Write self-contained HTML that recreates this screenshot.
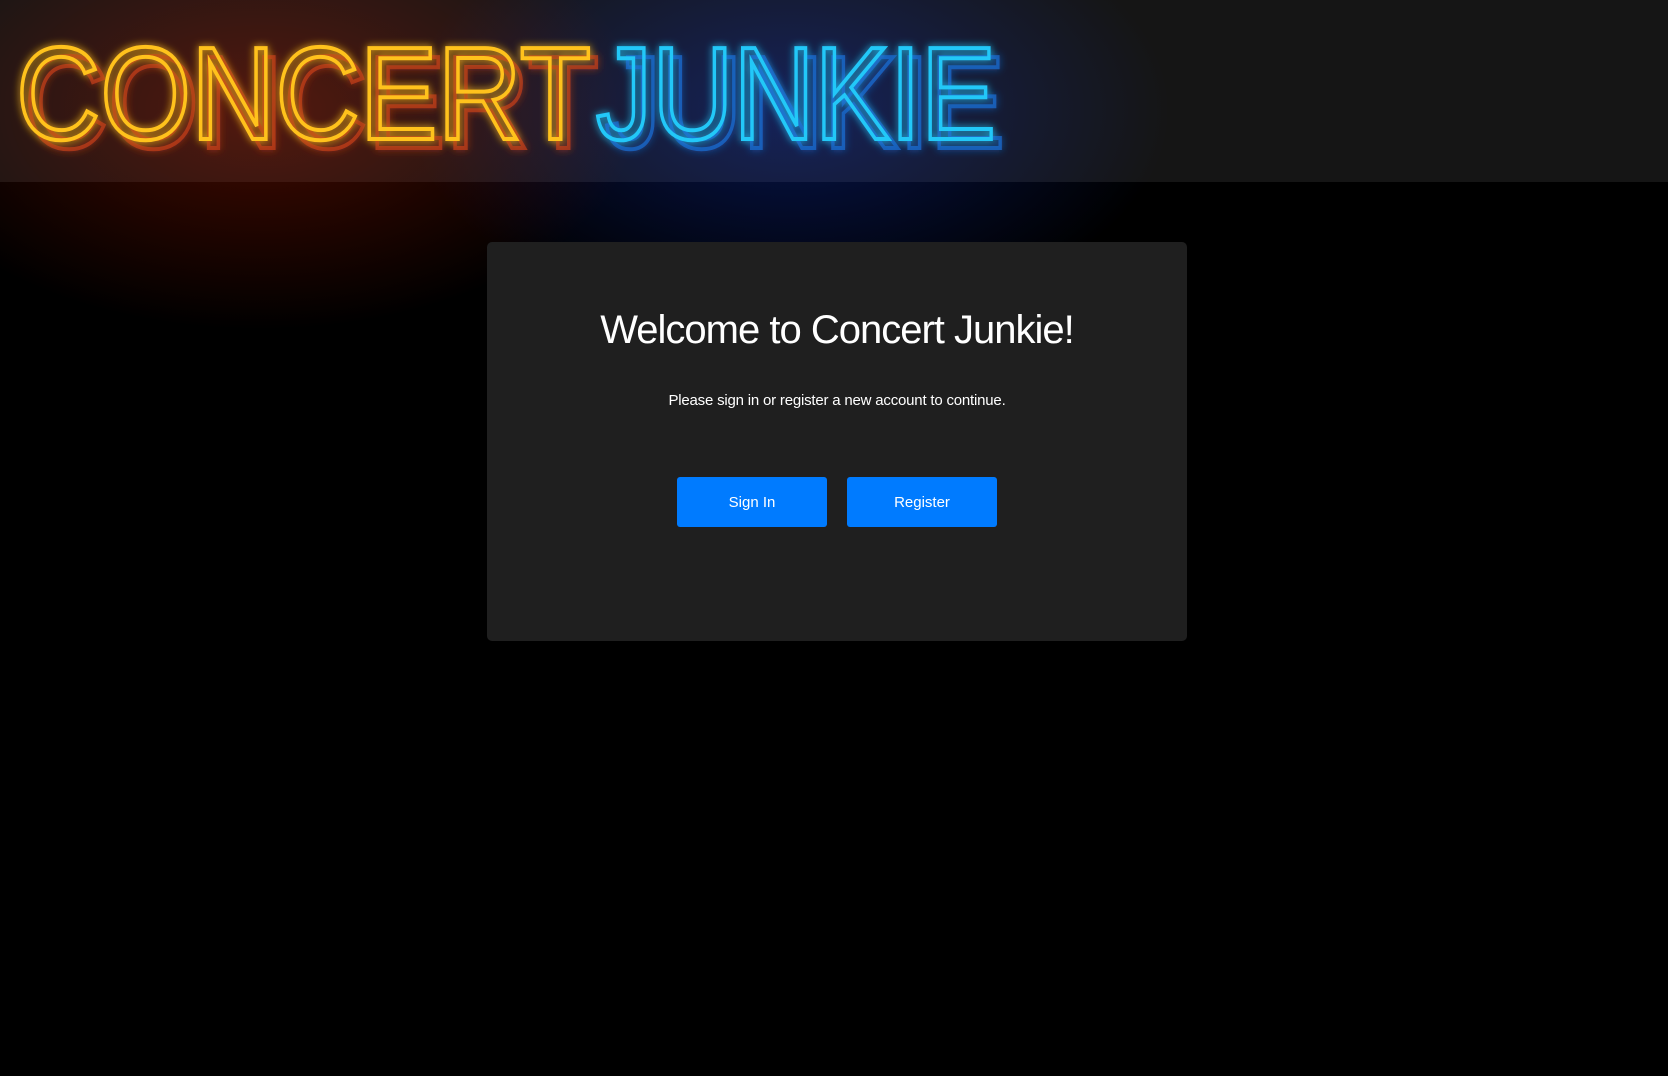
<!DOCTYPE html>
<html><head><meta charset="utf-8"><style>
html,body{margin:0;padding:0;background:#000;width:1668px;height:1076px;overflow:hidden;font-family:"Liberation Sans",sans-serif;}
.hdr{position:absolute;left:0;top:0;width:1668px;height:182px;background:#151515;}
.glow{position:absolute;left:0;top:0;width:1668px;height:420px;pointer-events:none;
background:radial-gradient(ellipse 380px 220px at 260px 110px,rgba(200,30,0,.35),rgba(200,30,0,0) 100%),
radial-gradient(ellipse 380px 220px at 790px 110px,rgba(20,60,220,.35),rgba(20,60,220,0) 100%);}
.card{position:absolute;left:487px;top:242px;width:700px;height:399px;background:#1f1f1f;border-radius:5px;text-align:center;color:#fff;}
h1{margin:0;position:absolute;top:66px;width:100%;font-weight:normal;font-size:40px;letter-spacing:-1px;}
p{margin:0;position:absolute;top:150px;width:100%;font-size:15px;letter-spacing:-0.2px;}
.btn{position:absolute;top:235px;width:150px;height:50px;background:#007bff;border-radius:3px;color:#fff;font-size:15px;line-height:52px;}
</style></head><body>
<div class="hdr"></div>
<div class="glow"></div>
<svg style="position:absolute;left:0;top:0" width="1100" height="190">
<defs>
<filter id="g" x="-10%" y="-30%" width="120%" height="160%"><feGaussianBlur stdDeviation="4" result="b"/><feMerge><feMergeNode in="b"/><feMergeNode in="SourceGraphic"/></feMerge></filter>
</defs>
<g font-family="Liberation Sans,sans-serif" font-size="132" fill="none" stroke-width="4" filter="url(#g)">
<text x="24" y="148" textLength="575" lengthAdjust="spacingAndGlyphs" stroke="#c8401a" opacity=".7">CONCERT</text>
<text x="605" y="148" textLength="400" lengthAdjust="spacingAndGlyphs" stroke="#1c6fd8" opacity=".7">JUNKIE</text>
<text x="16" y="139" textLength="575" lengthAdjust="spacingAndGlyphs" stroke="#ffc21c">CONCERT</text>
<text x="596" y="139" textLength="400" lengthAdjust="spacingAndGlyphs" stroke="#22c8f8">JUNKIE</text>
</g>
</svg>
<div class="card">
<h1>Welcome to Concert Junkie!</h1>
<p>Please sign in or register a new account to continue.</p>
<div class="btn" style="left:190px">Sign In</div>
<div class="btn" style="left:360px">Register</div>
</div>
</body></html>
